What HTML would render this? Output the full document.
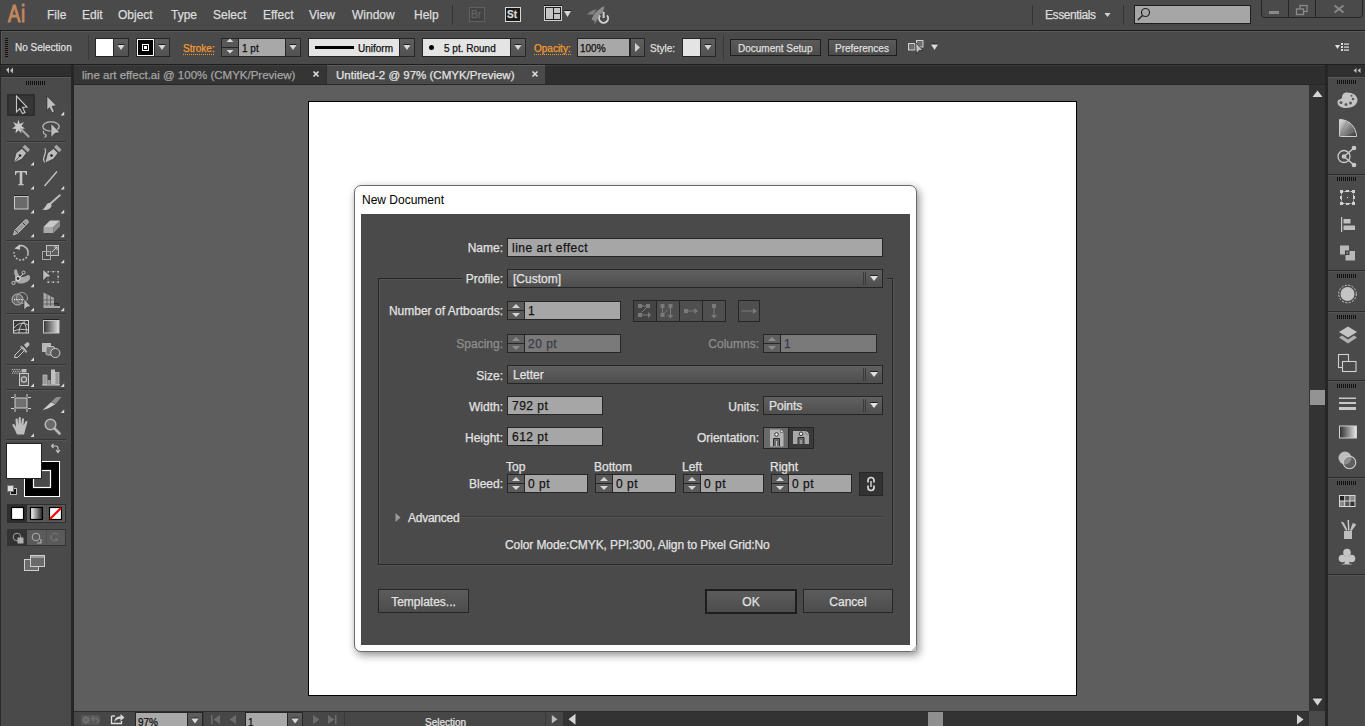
<!DOCTYPE html>
<html><head><meta charset="utf-8">
<style>
*{margin:0;padding:0;box-sizing:border-box}
html,body{width:1365px;height:726px;overflow:hidden;background:#4a4a4a;font-family:"Liberation Sans",sans-serif;font-size:12px;color:#dedede}
.a{position:absolute}
svg{position:absolute;overflow:visible}
.t{position:absolute;white-space:nowrap;line-height:1;-webkit-text-stroke:0.25px currentColor}
</style></head><body>
<!-- MENU BAR -->
<div class="a" style="left:0;top:0;width:1365px;height:30px;background:#4a4a4a"></div>
<div class="a" style="left:0;top:30px;width:1365px;height:1px;background:#1c1c1c"></div>
<!-- CONTROL BAR -->
<div class="a" style="left:0;top:31px;width:1365px;height:1px;background:#5a5a5a"></div>
<div class="a" style="left:0;top:32px;width:1365px;height:32px;background:#4a4a4a"></div>
<div class="a" style="left:0;top:64px;width:1365px;height:1px;background:#1e1e1e"></div>
<div class="a" style="left:0;top:31px;width:1px;height:33px;background:#262626"></div><div class="a" style="left:1px;top:32px;width:1px;height:32px;background:#585858"></div>
<!-- below control bar dark base -->
<div class="a" style="left:0;top:65px;width:1365px;height:661px;background:#262626"></div>
<!-- LEFT PANEL -->
<div class="a" style="left:1px;top:65px;width:70px;height:12px;background:#2f2f2f"></div>
<div class="a" style="left:1px;top:77px;width:70px;height:649px;background:#4a4a4a;border-top:1px solid #5a5a5a"></div>
<!-- TAB BAR -->
<div class="a" style="left:74px;top:65px;width:1251px;height:20px;background:#2e2e2e"></div>
<div class="a" style="left:74px;top:65px;width:1251px;height:1px;background:#3a3a3a"></div>

<div class="a" style="left:74px;top:65px;width:252px;height:19px;background:#353535;border-top:1px solid #404040"></div>
<div class="a" style="left:327px;top:65px;width:218px;height:19px;background:#4a4a4a;border-top:1px solid #5c5c5c"></div>

<div class="a" style="left:74px;top:84px;width:1251px;height:1px;background:#262626"></div>
<div class="a" style="left:1px;top:65px;width:70px;height:1px;background:#3a3a3a"></div>
<div class="a" style="left:1px;top:76px;width:70px;height:1px;background:#222"></div>
<div class="a" style="left:1328px;top:65px;width:37px;height:1px;background:#3a3a3a"></div>
<div class="a" style="left:1328px;top:76px;width:37px;height:1px;background:#222"></div>
<!-- CANVAS -->
<div class="a" style="left:74px;top:85px;width:1235px;height:626px;background:#5e5e5e"></div>
<!-- ARTBOARD -->
<div class="a" style="left:308px;top:101px;width:769px;height:595px;background:#fff;border:1px solid #000"></div>
<!-- V SCROLLBAR -->
<div class="a" style="left:1309px;top:85px;width:16px;height:626px;background:#333"></div>
<div class="a" style="left:1310px;top:390px;width:15px;height:15px;background:#939393"></div>
<!-- STATUS BAR / H SCROLL -->
<div class="a" style="left:74px;top:711px;width:1235px;height:15px;background:#474747;border-top:1px solid #2c2c2c"></div>
<div class="a" style="left:563px;top:711px;width:746px;height:15px;background:#333;border-top:1px solid #2c2c2c"></div>
<div class="a" style="left:928px;top:712px;width:15px;height:14px;background:#8f8f8f"></div>
<div class="a" style="left:1309px;top:711px;width:16px;height:15px;background:#4a4a4a"></div>
<!-- RIGHT PANEL -->
<div class="a" style="left:1328px;top:65px;width:37px;height:12px;background:#2f2f2f"></div>
<div class="a" style="left:1328px;top:77px;width:37px;height:649px;background:#4a4a4a;border-top:1px solid #5a5a5a"></div>


<!-- MENU CONTENT -->
<div class="t" style="left:8px;top:3px;font-size:23px;color:#c4875c;letter-spacing:1px;-webkit-text-stroke:1px #c4875c;transform:scaleX(0.8);transform-origin:0 0">Ai</div>
<div class="t" style="left:47px;top:9px;font-size:12px;color:#dcdcdc">File</div>
<div class="t" style="left:82px;top:9px;font-size:12px;color:#dcdcdc">Edit</div>
<div class="t" style="left:118px;top:9px;font-size:12px;color:#dcdcdc">Object</div>
<div class="t" style="left:171px;top:9px;font-size:12px;color:#dcdcdc">Type</div>
<div class="t" style="left:213px;top:9px;font-size:12px;color:#dcdcdc">Select</div>
<div class="t" style="left:263px;top:9px;font-size:12px;color:#dcdcdc">Effect</div>
<div class="t" style="left:309px;top:9px;font-size:12px;color:#dcdcdc">View</div>
<div class="t" style="left:352px;top:9px;font-size:12px;color:#dcdcdc">Window</div>
<div class="t" style="left:414px;top:9px;font-size:12px;color:#dcdcdc">Help</div>
<div class="a" style="left:452px;top:5px;width:1px;height:20px;background:#333"></div>
<div class="a" style="left:469px;top:7px;width:16px;height:15px;border:1px solid #606060;background:#434343"></div>
<div class="t" style="left:471px;top:10px;font-size:10px;color:#666">Br</div>
<div class="a" style="left:505px;top:7px;width:16px;height:15px;border:1px solid #d8d8d8;background:#1a1a1a"></div>
<div class="t" style="left:507px;top:10px;font-size:10px;font-weight:bold;color:#d8d8d8">St</div>
<svg style="left:0;top:0" width="620" height="30">
 <rect x="544" y="5" width="18" height="1" fill="#1e1e1e"/>
 <rect x="544" y="6" width="18" height="15" fill="#cfcfcf"/>
 <rect x="545" y="7" width="16" height="13" fill="#1e1e1e"/>
 <rect x="546" y="8" width="7" height="11" fill="#c4c4c4"/>
 <rect x="554" y="8" width="6" height="5" fill="#c4c4c4"/>
 <rect x="554" y="14" width="6" height="5" fill="#c4c4c4"/>
 <rect x="564" y="10" width="7" height="1" fill="#1e1e1e"/>
 <path d="M564 11 L571 11 L567.5 17 Z" fill="#d6d6d6"/>
 <path d="M587 14.5 C589.5 11.5 592.5 10 596.5 9.3 L593.5 14.8 Z" fill="#7e7e7e"/>
 <path d="M591.5 19.5 C593.5 14 598 9 604.5 6.3 C603.5 12 600 17 595.5 21.5 Z" fill="#8c8c8c"/>
 <path d="M594 24 L594.8 19.5 L597.2 21 Z" fill="#7e7e7e"/>
 <circle cx="603.6" cy="18.5" r="5.5" fill="#4a4a4a"/>
 <path d="M600.2 15.3 A4.5 4.5 0 1 0 607 15.3" fill="none" stroke="#d0d0d0" stroke-width="1.9"/>
 <rect x="602.6" y="11.8" width="2" height="6.2" fill="#d0d0d0"/>
</svg>
<div class="a" style="left:1032px;top:5px;width:1px;height:20px;background:#333"></div>
<div class="t" style="left:1045px;top:9px;font-size:12px;letter-spacing:-0.4px;color:#dcdcdc">Essentials</div>
<svg style="left:0;top:0" width="1365" height="30">
 <path d="M1104.5 13 L1110.5 13 L1107.5 17 Z" fill="#d6d6d6"/>
 <rect x="1123" y="5" width="1" height="20" fill="#333"/>
</svg>
<div class="a" style="left:1134px;top:5px;width:117px;height:19px;background:#a6a6a6;border:1px solid #1e1e1e"></div>
<svg style="left:0;top:0" width="1365" height="30">
 <circle cx="1145.5" cy="12.5" r="4" fill="none" stroke="#222" stroke-width="1.2"/>
 <path d="M1142.5 15.5 L1137.8 20" stroke="#222" stroke-width="1.4"/>
</svg>
<div class="a" style="left:1261px;top:-3px;width:102px;height:21px;border:1px solid #262626;border-radius:0 0 4px 4px;background:#4a4a4a"></div>
<div class="a" style="left:1288px;top:0;width:1px;height:18px;background:#262626"></div>
<div class="a" style="left:1315px;top:0;width:1px;height:18px;background:#262626"></div>
<svg style="left:0;top:0" width="1365" height="30">
 <rect x="1269" y="11" width="10" height="3" fill="#8a8a8a"/>
 <rect x="1300" y="5.5" width="7" height="6" fill="none" stroke="#8a8a8a" stroke-width="1.3"/>
 <rect x="1296.5" y="9" width="7" height="5.5" fill="#4a4a4a" stroke="#8a8a8a" stroke-width="1.3"/>
 <path d="M1334.5 5.5 L1343.5 12.5 M1343.5 5.5 L1334.5 12.5" stroke="#8a8a8a" stroke-width="1.8"/>
</svg>


<!-- CONTROL BAR CONTENT -->
<svg style="left:0;top:0" width="20" height="64">
 <g fill="#111"><rect x="5" y="38" width="3" height="1"/><rect x="5" y="40" width="3" height="1"/><rect x="5" y="42" width="3" height="1"/><rect x="5" y="44" width="3" height="1"/><rect x="5" y="46" width="3" height="1"/><rect x="5" y="48" width="3" height="1"/><rect x="5" y="50" width="3" height="1"/><rect x="5" y="52" width="3" height="1"/><rect x="5" y="54" width="3" height="1"/><rect x="5" y="56" width="3" height="1"/></g>
</svg>
<div class="t" style="left:15px;top:43px;font-size:10px;color:#dedede">No Selection</div>
<div class="a" style="left:88px;top:35px;width:1px;height:25px;background:#393939"></div>
<div class="a" style="left:95px;top:38px;width:34px;height:19px;background:#262626"></div>
<div class="a" style="left:96px;top:39px;width:17px;height:17px;background:#fff"></div>
<div class="a" style="left:114px;top:39px;width:14px;height:17px;background:linear-gradient(#5e5e5e,#525252)"></div>
<div class="a" style="left:136px;top:38px;width:34px;height:19px;background:#262626"></div>
<div class="a" style="left:137px;top:39px;width:17px;height:17px;background:#000;border:1px solid #fff"></div>
<div class="a" style="left:142px;top:44px;width:7px;height:7px;border:1px solid #fff;background:#000"></div>
<div class="a" style="left:144px;top:46px;width:3px;height:3px;background:#fff"></div>
<div class="a" style="left:155px;top:39px;width:14px;height:17px;background:linear-gradient(#5e5e5e,#525252)"></div>
<div class="t" style="left:183px;top:44px;font-size:10px;color:#f39a2e">Stroke:</div>
<svg style="left:0;top:0" width="1365" height="64"><g fill="#f39a2e"><rect x="183" y="54" width="1" height="1"/><rect x="185" y="54" width="1" height="1"/><rect x="187" y="54" width="1" height="1"/><rect x="189" y="54" width="1" height="1"/><rect x="191" y="54" width="1" height="1"/><rect x="193" y="54" width="1" height="1"/><rect x="195" y="54" width="1" height="1"/><rect x="197" y="54" width="1" height="1"/><rect x="199" y="54" width="1" height="1"/><rect x="201" y="54" width="1" height="1"/><rect x="203" y="54" width="1" height="1"/><rect x="205" y="54" width="1" height="1"/><rect x="207" y="54" width="1" height="1"/><rect x="209" y="54" width="1" height="1"/><rect x="211" y="54" width="1" height="1"/><rect x="213" y="54" width="1" height="1"/></g></svg>
<div class="a" style="left:221px;top:38px;width:80px;height:19px;background:#262626"></div>
<div class="a" style="left:222px;top:39px;width:16px;height:8px;background:#585858"></div>
<div class="a" style="left:222px;top:48px;width:16px;height:8px;background:#585858"></div>
<div class="a" style="left:239px;top:39px;width:46px;height:17px;background:#a8a8a8"></div>
<div class="a" style="left:286px;top:39px;width:14px;height:17px;background:linear-gradient(#5e5e5e,#525252)"></div>
<div class="t" style="left:242px;top:44px;font-size:10px;color:#111">1 pt</div>
<div class="a" style="left:308px;top:38px;width:107px;height:19px;background:#262626"></div>
<div class="a" style="left:309px;top:39px;width:90px;height:17px;background:#e4e4e4"></div>
<div class="a" style="left:315px;top:46px;width:39px;height:3px;background:#000"></div>
<div class="t" style="left:358px;top:44px;font-size:10px;color:#111">Uniform</div>
<div class="a" style="left:400px;top:39px;width:14px;height:17px;background:linear-gradient(#5e5e5e,#525252)"></div>
<div class="a" style="left:422px;top:38px;width:104px;height:19px;background:#262626"></div>
<div class="a" style="left:423px;top:39px;width:87px;height:17px;background:#e4e4e4"></div>
<div class="a" style="left:429px;top:45px;width:5px;height:5px;border-radius:50%;background:#000"></div>
<div class="t" style="left:444px;top:44px;font-size:10px;color:#111">5 pt. Round</div>
<div class="a" style="left:511px;top:39px;width:14px;height:17px;background:linear-gradient(#5e5e5e,#525252)"></div>
<div class="t" style="left:534px;top:44px;font-size:10px;color:#f39a2e">Opacity:</div>
<svg style="left:0;top:0" width="1365" height="64"><g fill="#f39a2e"><rect x="534" y="54" width="1" height="1"/><rect x="536" y="54" width="1" height="1"/><rect x="538" y="54" width="1" height="1"/><rect x="540" y="54" width="1" height="1"/><rect x="542" y="54" width="1" height="1"/><rect x="544" y="54" width="1" height="1"/><rect x="546" y="54" width="1" height="1"/><rect x="548" y="54" width="1" height="1"/><rect x="550" y="54" width="1" height="1"/><rect x="552" y="54" width="1" height="1"/><rect x="554" y="54" width="1" height="1"/><rect x="556" y="54" width="1" height="1"/><rect x="558" y="54" width="1" height="1"/><rect x="560" y="54" width="1" height="1"/><rect x="562" y="54" width="1" height="1"/><rect x="564" y="54" width="1" height="1"/><rect x="566" y="54" width="1" height="1"/><rect x="568" y="54" width="1" height="1"/><rect x="570" y="54" width="1" height="1"/></g></svg>
<div class="a" style="left:577px;top:38px;width:68px;height:19px;background:#262626"></div>
<div class="a" style="left:578px;top:39px;width:51px;height:17px;background:#a8a8a8"></div>
<div class="t" style="left:580px;top:44px;font-size:10px;color:#111">100%</div>
<div class="a" style="left:630px;top:39px;width:14px;height:17px;background:linear-gradient(#5e5e5e,#525252)"></div>
<div class="t" style="left:650px;top:44px;font-size:10px;color:#dedede">Style:</div>
<div class="a" style="left:682px;top:38px;width:34px;height:19px;background:#262626"></div>
<div class="a" style="left:683px;top:39px;width:17px;height:17px;background:#e4e4e4"></div>
<div class="a" style="left:701px;top:39px;width:14px;height:17px;background:linear-gradient(#5e5e5e,#525252)"></div>
<div class="a" style="left:723px;top:35px;width:1px;height:25px;background:#393939"></div>
<div class="a" style="left:730px;top:39px;width:91px;height:17px;background:linear-gradient(#5a5a5a,#4c4c4c);border:1px solid #1e1e1e"></div>
<div class="t" style="left:738px;top:44px;font-size:10px;color:#dedede">Document Setup</div>
<div class="a" style="left:828px;top:39px;width:69px;height:17px;background:linear-gradient(#5a5a5a,#4c4c4c);border:1px solid #1e1e1e"></div>
<div class="t" style="left:835px;top:44px;font-size:10px;color:#dedede">Preferences</div>
<svg style="left:0;top:0" width="1365" height="64">
 <rect x="117.5" y="44" width="7" height="1" fill="#1e1e1e"/><path d="M117.5 45 L124.5 45 L121.0 50 Z" fill="#d8d8d8"/><rect x="158.5" y="44" width="7" height="1" fill="#1e1e1e"/><path d="M158.5 45 L165.5 45 L162.0 50 Z" fill="#d8d8d8"/><rect x="289.5" y="44" width="7" height="1" fill="#1e1e1e"/><path d="M289.5 45 L296.5 45 L293.0 50 Z" fill="#d8d8d8"/><rect x="403.5" y="44" width="7" height="1" fill="#1e1e1e"/><path d="M403.5 45 L410.5 45 L407.0 50 Z" fill="#d8d8d8"/><rect x="514.5" y="44" width="7" height="1" fill="#1e1e1e"/><path d="M514.5 45 L521.5 45 L518.0 50 Z" fill="#d8d8d8"/><rect x="704.5" y="44" width="7" height="1" fill="#1e1e1e"/><path d="M704.5 45 L711.5 45 L708.0 50 Z" fill="#d8d8d8"/><rect x="931" y="43.5" width="7" height="1" fill="#1e1e1e"/><path d="M931 44.5 L938 44.5 L934.5 50.0 Z" fill="#d8d8d8"/>
 <path d="M226.5 42 L233.5 42 L230 38.5 Z" fill="#d8d8d8"/>
 <path d="M226.5 50 L233.5 50 L230 53.5 Z" fill="#d8d8d8"/>
 <rect x="630" y="39" width="1" height="17" fill="#262626"/>
 <path d="M635 43 L640 47.5 L635 52 Z" fill="#d0d0d0"/>
 <rect x="908.5" y="43.5" width="6.5" height="6.5" fill="#6e6e6e" stroke="#d0d0d0" stroke-width="1"/>
 <rect x="916.5" y="40.5" width="6.5" height="6.5" fill="#6e6e6e" stroke="#d0d0d0" stroke-width="1"/>
 <path d="M915.5 42.5 L923 50.5 L919 50.5 L916.5 54 Z" fill="#c4c4c4" stroke="#111" stroke-width="0.6"/>
 <path d="M1335 45 L1340 45 L1337.5 49 Z" fill="#e0e0e0"/>
 <g fill="#e0e0e0"><rect x="1341" y="43" width="2" height="2"/><rect x="1341" y="46" width="2" height="2"/><rect x="1341" y="49" width="2" height="2"/>
 <rect x="1344" y="43.5" width="5" height="1.2"/><rect x="1344" y="46.5" width="5" height="1.2"/><rect x="1344" y="49.5" width="5" height="1.2"/></g>
</svg>


<!-- TAB TEXT -->
<div class="t" style="left:82px;top:70px;font-size:11.5px;color:#a4a4a4">line art effect.ai @ 100% (CMYK/Preview)</div>
<div class="t" style="left:336px;top:70px;font-size:11.5px;color:#e2e2e2">Untitled-2 @ 97% (CMYK/Preview)</div>
<svg style="left:0;top:0" width="1365" height="726">
 <path d="M313.5 71.5 L318.5 76.5 M318.5 71.5 L313.5 76.5" stroke="#dadada" stroke-width="1.7"/>
 <path d="M532.5 71.5 L537.5 76.5 M537.5 71.5 L532.5 76.5" stroke="#dadada" stroke-width="1.7"/>
 <path d="M1312.5 97 L1322.5 97 L1317.5 90.5 Z" fill="#d4d4d4"/>
 <rect x="1312" y="697.5" width="11" height="1" fill="#1e1e1e"/>
 <path d="M1312.5 698.5 L1322.5 698.5 L1317.5 705.5 Z" fill="#d4d4d4"/>
 <path d="M1297 714.5 L1303.5 719.5 L1297 724.5 Z" fill="#d4d4d4"/>
 <path d="M575.5 713.7 L568.5 719.2 L575.5 724.8 Z" fill="#d4d4d4"/>
 <path d="M551.8 715 L557.4 719.2 L551.8 723.4 Z" fill="#bcbcbc"/>
</svg>
<!-- STATUS BAR CONTENT -->
<div class="a" style="left:81px;top:715px;width:19px;height:10px;border-radius:2px;background:#575757"></div>
<svg style="left:0;top:0" width="1365" height="726">
 <g fill="#6e6e6e"><circle cx="86" cy="720" r="3.2"/></g>
 <g stroke="#6e6e6e" stroke-width="1.4"><path d="M82 720 L90 720 M86 716 L86 724 M83.2 717.2 L88.8 722.8 M88.8 717.2 L83.2 722.8"/></g>
 <circle cx="86" cy="720" r="1" fill="#575757"/>
 <path d="M91.5 718.5 L94 716 M91.5 718.5 L94 721 M92 718.5 L97 718.5 L99 720.5 L96.5 723" stroke="#6e6e6e" stroke-width="1.3" fill="none"/>
 <path d="M111.5 716 L111.5 723.5 L121.5 723.5 L121.5 721" stroke="#e0e0e0" stroke-width="1.3" fill="none"/>
 <path d="M111.5 716 L115 716" stroke="#e0e0e0" stroke-width="1.3"/>
 <path d="M114.5 722 C114.5 718 117 716.5 120.5 716.5 L120.5 714 L124.5 717.5 L120.5 721 L120.5 718.8 C118 718.8 116 719.5 114.5 722 Z" fill="#d8d8d8"/>
 <rect x="203" y="712" width="1" height="14" fill="#3a3a3a"/>
 <g fill="#6c6c6c">
 <rect x="211" y="715" width="1.5" height="9"/><path d="M220 715 L213.5 719.5 L220 724 Z"/>
 <path d="M236 715 L229.5 719.5 L236 724 Z"/>
 <path d="M313 715 L319.5 719.5 L313 724 Z"/>
 <path d="M328 715 L334.5 719.5 L328 724 Z"/><rect x="335" y="715" width="1.5" height="9"/>
 </g>
 <rect x="344" y="712" width="1" height="14" fill="#3a3a3a"/>
 <rect x="545" y="712" width="1" height="14" fill="#3a3a3a"/>
</svg>
<div class="a" style="left:135px;top:712px;width:68px;height:14px;background:#262626"></div>
<div class="a" style="left:136px;top:713px;width:51px;height:13px;background:#a8a8a8"></div>
<div class="a" style="left:188px;top:713px;width:14px;height:13px;background:linear-gradient(#5e5e5e,#525252)"></div>
<div class="t" style="left:138px;top:718px;font-size:10px;color:#111">97%</div>
<div class="a" style="left:245px;top:712px;width:58px;height:14px;background:#262626"></div>
<div class="a" style="left:246px;top:713px;width:41px;height:13px;background:#a8a8a8"></div>
<div class="a" style="left:288px;top:713px;width:14px;height:13px;background:linear-gradient(#5e5e5e,#525252)"></div>
<div class="t" style="left:248px;top:718px;font-size:10px;color:#111">1</div>
<div class="t" style="left:425px;top:718px;font-size:10px;color:#e0e0e0">Selection</div>
<svg style="left:0;top:0" width="1365" height="726"><rect x="191.3" y="717.6" width="7.3" height="1" fill="#1e1e1e"/><path d="M191.3 718.6 L198.60000000000002 718.6 L194.95000000000002 723.6 Z" fill="#d8d8d8"/><rect x="291.5" y="717.6" width="7.3" height="1" fill="#1e1e1e"/><path d="M291.5 718.6 L298.8 718.6 L295.15 723.6 Z" fill="#d8d8d8"/></svg>


<!-- LEFT TOOLBAR CONTENT -->
<div class="a" style="left:0;top:65px;width:1px;height:661px;background:#2a2a2a"></div>
<svg style="left:0;top:0" width="72" height="726">
 <path d="M6 69.5 L9 67.5 L9 73.5 Z M10 70.5 L13 67.5 L13 73.5 Z" fill="#bbb"/>
 <g fill="#111"><rect x="26" y="81" width="1" height="4"/><rect x="28" y="81" width="1" height="4"/><rect x="30" y="81" width="1" height="4"/><rect x="32" y="81" width="1" height="4"/><rect x="34" y="81" width="1" height="4"/><rect x="36" y="81" width="1" height="4"/><rect x="38" y="81" width="1" height="4"/><rect x="40" y="81" width="1" height="4"/><rect x="42" y="81" width="1" height="4"/><rect x="44" y="81" width="1" height="4"/></g>
 <rect x="7" y="94" width="28" height="22" fill="#2e2e2e"/>
 <rect x="9" y="96" width="24" height="18" fill="#363636"/>
 <path d="M16.5 96 L16.5 112 L19.8 108.7 L22.5 113.5 L25 112.5 L22.5 107.2 L27 107 Z" fill="#2a2a2a" stroke="#c8c8c8" stroke-width="1.1" stroke-linejoin="miter"/>
 <path d="M47 96.2 L47 110.3 L49.5 107.6 L52 112.6 L54.3 111.8 L52.1 106.3 L56.3 105.6 Z" fill="#bdbdbd" stroke="#1e1e1e" stroke-width="0.5"/>
 <path d="M64.2 111.60000000000001 L64.2 115.4 L60.7 115.4 Z" fill="#d8d8d8"/>
 <g fill="#c8c8c8">
  <path d="M18.5 119.5 L19.8 124 L24 122 L21.5 126 L25 128.5 L21 129 L21.5 133.5 L18.5 130.2 L15.5 133.5 L16 129 L12 128.5 L15.5 126 L13 122 L17.2 124 Z"/>
 </g>
 <path d="M21 129 L28.5 136.5" stroke="#a8a8a8" stroke-width="2" stroke-linecap="round"/>
 <ellipse cx="51" cy="126.5" rx="8.2" ry="4.6" fill="none" stroke="#bcbcbc" stroke-width="1.3"/>
 <path d="M44 131 C42 133 45 134 46 135 C47 136 45 137.5 44.5 137" stroke="#bcbcbc" stroke-width="1.1" fill="none"/>
 <path d="M51 123.5 L51 137.5 L55 133.3 L60 132.5 Z" fill="#bdbdbd" stroke="#1e1e1e" stroke-width="0.5"/>
 <rect x="6" y="141" width="60" height="1" fill="#353535"/><rect x="6" y="142" width="60" height="1" fill="#555"/>
 <!-- pen -->
 <path d="M13.5 163 L16 153 L22 148.5 L26.5 153 L22 159 Z" fill="#bdbdbd" stroke="#2a2a2a" stroke-width="0.6"/>
 <path d="M22.5 147 L25 144.8 L30 149.8 L27.8 152.2 Z" fill="#a8a8a8"/>
 <circle cx="20" cy="155.5" r="1.3" fill="#222"/>
 <path d="M13.5 163 L19.5 156.5" stroke="#333" stroke-width="0.8"/>
 <path d="M34 161.7 L34 165.5 L30.5 165.5 Z" fill="#d8d8d8"/>
 <path d="M44.5 148.5 C47 149.5 45 154 44 157 C43 160 44 162.5 46 162.5" stroke="#bcbcbc" stroke-width="1.3" fill="none"/>
 <path d="M45 163 L47.5 153 L53.5 148.5 L58 153 L53.5 159 Z" fill="#bdbdbd" stroke="#2a2a2a" stroke-width="0.6"/>
 <path d="M54 147 L56.5 144.8 L61.5 149.8 L59.3 152.2 Z" fill="#a8a8a8"/>
 <circle cx="51.5" cy="155.5" r="1.3" fill="#222"/>
 <!-- type -->
 <path d="M15 171 L27 171 L27 175 L26 175 C26 173 25 172.3 23 172.3 L22.3 172.3 L22.3 184 L24 184.5 L24 185.2 L18 185.2 L18 184.5 L19.7 184 L19.7 172.3 L19 172.3 C17 172.3 16 173 16 175 L15 175 Z" fill="#c4c4c4"/>
 <path d="M34 185.7 L34 189.5 L30.5 189.5 Z" fill="#d8d8d8"/>
 <path d="M44.5 186 L57 171.5" stroke="#c4c4c4" stroke-width="1.3"/>
 <path d="M64.2 185.7 L64.2 189.5 L60.7 189.5 Z" fill="#d8d8d8"/>
 <!-- rect -->
 <rect x="14.5" y="196.5" width="13.5" height="12.5" fill="#6a6a6a" stroke="#c8c8c8" stroke-width="1"/>
 <rect x="14" y="195" width="14" height="1" fill="#222"/>
 <path d="M34 209.6 L34 213.4 L30.5 213.4 Z" fill="#d8d8d8"/>
 <path d="M50 204 L59.8 195.3" stroke="#bdbdbd" stroke-width="1.9" stroke-linecap="round"/><path d="M42 209.5 C44.5 209 45.5 206 47 204 C48 202.8 50 202.8 51 204 C52 205.3 51.5 207 50 208.2 C48 209.8 45 210.5 42 209.5 Z" fill="#c4c4c4"/>
 <path d="M64.2 209.6 L64.2 213.4 L60.7 213.4 Z" fill="#d8d8d8"/>
 <!-- pencil -->
 <path d="M13.5 235 L15 230 L24.5 220.5 C25.5 219.5 27 219.5 27.8 220.5 C28.5 221.3 28.5 222.6 27.5 223.5 L18 233 Z" fill="#9a9a9a" stroke="#cfcfcf" stroke-width="0.8"/>
 <path d="M15 230 L18 233" stroke="#222" stroke-width="0.7"/>
 <path d="M22.5 222.5 L25.5 225.5" stroke="#222" stroke-width="0.7"/>
 <path d="M34 233.5 L34 237.3 L30.5 237.3 Z" fill="#d8d8d8"/>
 <path d="M43.5 227 L50 220.5 L60 220.5 L53.5 227 Z" fill="#c8c8c8"/>
 <path d="M43.5 227 L53.5 227 L53.5 233 L43.5 233 Z" fill="#a8a8a8"/>
 <path d="M53.5 227 L60 220.5 L60 226.5 L53.5 233 Z" fill="#8a8a8a"/>
 <path d="M64.2 233.5 L64.2 237.3 L60.7 237.3 Z" fill="#d8d8d8"/><rect x="6" y="240" width="60" height="1" fill="#353535"/><rect x="6" y="241" width="60" height="1" fill="#555"/>
 <!-- rotate -->
 <path d="M18.7 246.1 A7 7 0 0 1 28 253.9" fill="none" stroke="#c0c0c0" stroke-width="1.5"/><path d="M28 253.9 A7 7 0 0 1 14.1 252.1" fill="none" stroke="#c0c0c0" stroke-width="1.6" stroke-dasharray="1.8 1.6"/><path d="M14.3 248.6 L20.2 244.3 L20 249.8 Z" fill="#c8c8c8"/>
 <path d="M34 259.5 L34 263.3 L30.5 263.3 Z" fill="#d8d8d8"/>
 <rect x="46.5" y="245.5" width="12" height="10" fill="#5e5e5e" stroke="#c0c0c0" stroke-width="1"/>
 <rect x="42.5" y="251.5" width="8" height="8" fill="none" stroke="#a8a8a8" stroke-width="1"/>
 <path d="M52 252 L57 247 M54 247 L57 247 L57 250" stroke="#d0d0d0" stroke-width="1" fill="none"/>
 <path d="M64.2 259.5 L64.2 263.3 L60.7 263.3 Z" fill="#d8d8d8"/>
 <!-- warp / puppet -->
 <path d="M14 272 C14 269 16.5 268.5 17.2 270.5 C17.8 273 18.2 275 20.2 276.3 C23 277.8 26 276.3 27.5 275 C29.5 274.3 30.8 276.8 29.8 279 C28.3 282 23.5 284 19.5 283.5 C16.5 283 14.8 281 15.2 278.3 C15.6 276 14 274 14 272 Z" fill="#a8a8a8"/>
 <path d="M13.5 283 L23.5 273.5" stroke="#e0e0e0" stroke-width="0.8"/>
 <circle cx="13.5" cy="283" r="1.6" fill="#444" stroke="#e0e0e0" stroke-width="0.8"/>
 <circle cx="18" cy="278.5" r="2" fill="#333" stroke="#e8e8e8" stroke-width="1"/>
 <circle cx="23.5" cy="272.5" r="1.5" fill="#444" stroke="#e0e0e0" stroke-width="0.8"/>
 <path d="M34 283.5 L34 287.3 L30.5 287.3 Z" fill="#d8d8d8"/>
 <path d="M43 269.5 L43 281 L46.5 277 L51 276.5 Z" fill="#bdbdbd" stroke="#1e1e1e" stroke-width="0.4"/>
 <g fill="#c8c8c8"><rect x="47.5" y="271" width="1.5" height="1.5"/><rect x="52.5" y="271" width="1.5" height="1.5"/><rect x="57.5" y="271" width="1.5" height="1.5"/><rect x="57.5" y="276" width="1.5" height="1.5"/><rect x="57.5" y="281.5" width="1.5" height="1.5"/><rect x="52.5" y="281.5" width="1.5" height="1.5"/><rect x="47.5" y="281.5" width="1.5" height="1.5"/></g>
 <rect x="48" y="271.5" width="10" height="10.5" fill="none" stroke="#c8c8c8" stroke-width="0.6" stroke-dasharray="1 1.2"/>
 <!-- shape builder -->
 <circle cx="17.5" cy="299.5" r="5.5" fill="#6a6a6a" stroke="#bcbcbc" stroke-width="1"/>
 <circle cx="22" cy="298" r="5.5" fill="none" stroke="#a0a0a0" stroke-width="1"/>
 <g fill="#e8e8e8"><rect x="14.0" y="299" width="1.2" height="1.2"/><rect x="16.3" y="299" width="1.2" height="1.2"/><rect x="18.6" y="299" width="1.2" height="1.2"/><rect x="20.9" y="299" width="1.2" height="1.2"/><rect x="23.2" y="299" width="1.2" height="1.2"/></g>
 <path d="M24 299 L24 310 L27 307 L31 306.5 Z" fill="#bdbdbd" stroke="#1e1e1e" stroke-width="0.5"/>
 <path d="M34 307.4 L34 311.2 L30.5 311.2 Z" fill="#d8d8d8"/>
 <path d="M43.5 292.5 L43.5 308 L60 308 L60 306 L54 306 L54 298 L43.5 292.5 Z" fill="#a8a8a8"/>
 <path d="M47 294.5 L47 306 M50.5 296.3 L50.5 306 M43.5 300 L54 300 M43.5 304 L54 304" stroke="#555" stroke-width="0.8"/>
 <path d="M54 303.5 L58 303.5 L58 306" stroke="#222" stroke-width="0.8" fill="none"/>
 <path d="M64.2 307.4 L64.2 311.2 L60.7 311.2 Z" fill="#d8d8d8"/><rect x="6" y="313" width="60" height="1" fill="#353535"/><rect x="6" y="314" width="60" height="1" fill="#555"/>
 <!-- mesh -->
 <rect x="13.5" y="320.5" width="15" height="12.5" fill="#3a3a3a" stroke="#cfcfcf" stroke-width="1"/>
 <path d="M14 328 C18 323 22 322 28 325 M19 333 C19 328 21 324 25 320.5 M14 331 C18 329 23 329 28 330 M24 322 C26 326 27 329 26 333" stroke="#d0d0d0" stroke-width="0.9" fill="none"/>
 <defs><linearGradient id="gr1" x1="0" x2="1"><stop offset="0" stop-color="#333"/><stop offset="1" stop-color="#e0e0e0"/></linearGradient></defs>
 <rect x="43.5" y="320.5" width="15.5" height="12.5" fill="url(#gr1)" stroke="#c8c8c8" stroke-width="1"/>
 <rect x="43" y="319" width="16" height="1" fill="#222"/>
 <!-- eyedropper -->
 <path d="M14.5 357.5 L15 355 L23 347 L25.5 349.5 L17.5 357.5 Z" fill="#4a4a4a" stroke="#d8d8d8" stroke-width="0.9"/>
 <path d="M21.5 345.5 L27.5 351.5 L26 353 L20 347 Z" fill="#a8a8a8"/>
 <path d="M24 345 L26 343 C27 342 28.5 342 29 343 C29.8 344 29.5 345 28.8 345.8 L26.5 348 Z" fill="#bdbdbd"/>
 <path d="M34 357.2 L34 361 L30.5 361 Z" fill="#d8d8d8"/>
 <rect x="42" y="343" width="9" height="9" fill="#b8b8b8"/>
 <rect x="46" y="346.5" width="8.5" height="8.5" rx="1.5" fill="#777" stroke="#cfcfcf" stroke-width="0.8"/>
 <circle cx="55.3" cy="353" r="4.6" fill="#555" stroke="#cfcfcf" stroke-width="1"/>
 <rect x="6" y="364" width="60" height="1" fill="#353535"/><rect x="6" y="365" width="60" height="1" fill="#555"/>
 <!-- symbol sprayer -->
 <g fill="#c8c8c8"><rect x="12.0" y="369.0" width="1.1" height="1.1"/><rect x="13.0" y="370.8" width="1.1" height="1.1"/><rect x="12.0" y="372.6" width="1.1" height="1.1"/><rect x="14.2" y="369.0" width="1.1" height="1.1"/><rect x="15.2" y="370.8" width="1.1" height="1.1"/><rect x="14.2" y="372.6" width="1.1" height="1.1"/><rect x="16.4" y="369.0" width="1.1" height="1.1"/><rect x="17.4" y="370.8" width="1.1" height="1.1"/><rect x="16.4" y="372.6" width="1.1" height="1.1"/><rect x="18.6" y="369.0" width="1.1" height="1.1"/><rect x="19.6" y="370.8" width="1.1" height="1.1"/><rect x="18.6" y="372.6" width="1.1" height="1.1"/></g>
 <rect x="19.5" y="373.5" width="9" height="12" fill="#5a5a5a" stroke="#c8c8c8" stroke-width="1"/>
 <rect x="21.5" y="369" width="5" height="3.5" fill="#b8b8b8"/>
 <circle cx="24" cy="379.5" r="2.6" fill="none" stroke="#c8c8c8" stroke-width="1.2"/>
 <path d="M34 383.2 L34 387 L30.5 387 Z" fill="#d8d8d8"/>
 <rect x="43" y="375" width="4" height="9.5" fill="#999" stroke="#d0d0d0" stroke-width="0.6"/>
 <rect x="47.5" y="380" width="3" height="4.5" fill="#999"/>
 <rect x="51" y="369.5" width="4" height="15" fill="#c0c0c0"/>
 <rect x="55.5" y="372.5" width="3.5" height="12" fill="#999" stroke="#d0d0d0" stroke-width="0.6"/>
 <rect x="42" y="384.5" width="18" height="1" fill="#d0d0d0"/>
 <path d="M64.2 383.2 L64.2 387 L60.7 387 Z" fill="#d8d8d8"/><rect x="6" y="389" width="60" height="1" fill="#353535"/><rect x="6" y="390" width="60" height="1" fill="#555"/>
 <!-- artboard -->
 <rect x="15" y="398" width="12" height="10" fill="#707070" stroke="#d0d0d0" stroke-width="1"/>
 <path d="M11 397.5 L14 397.5 M28 397.5 L31 397.5 M11 408.5 L14 408.5 M28 408.5 L31 408.5 M15 394 L15 397 M27 394 L27 397 M15 409 L15 412 M27 409 L27 412" stroke="#d0d0d0" stroke-width="1"/>
 <path d="M42.5 410.3 L51 402.2 L55.3 404.3 L48.5 408.3 Z" fill="#cfcfcf"/>
 <path d="M51.3 401.8 L56.3 397 L61.5 397 L55.6 404 Z" fill="#8e8e8e"/>
 <path d="M64.2 409.2 L64.2 413 L60.7 413 Z" fill="#d8d8d8"/>
 <!-- hand -->
 <path d="M17 434.5 L15 430 L12.5 425.5 C12 424 13.5 423.3 14.5 424.5 L16 427 L15.5 419.5 C15.5 418 17.5 418 17.7 419.5 L18.3 425 L18.7 418 C18.8 416.8 20.8 416.8 20.8 418 L21 425 L22 419 C22.2 417.8 24 418 24 419.2 L23.5 425.5 L25.5 421.5 C26 420.5 27.8 421 27.4 422.3 L25.5 429 L24 434.5 Z" fill="#bdbdbd"/>
 <path d="M34 433.2 L34 437 L30.5 437 Z" fill="#d8d8d8"/>
 <circle cx="50.5" cy="424.5" r="5.3" fill="#6a6a6a" stroke="#b8b8b8" stroke-width="1.5"/>
 <path d="M54.5 428.5 L59.5 433.5" stroke="#b8b8b8" stroke-width="2.6" stroke-linecap="round"/>
 <rect x="6" y="439" width="60" height="1" fill="#353535"/><rect x="6" y="440" width="60" height="1" fill="#555"/>
 <!-- fill stroke -->
 <rect x="24.5" y="461.5" width="35" height="35" fill="#000" stroke="#ffffff" stroke-width="1"/>
 <rect x="33.5" y="470.5" width="17" height="17" fill="#4a4a4a" stroke="#ffffff" stroke-width="1.2"/>
 <rect x="6.5" y="443.5" width="35" height="35" fill="#fff" stroke="#222" stroke-width="1"/>
 <path d="M51.5 446 L53.5 444 M51.5 446 L53.5 448 M51.5 446 L56 446 C57.5 446 58 447 58 448.5 L58 452 M56 450 L58 452.5 L60 450" stroke="#c8c8c8" stroke-width="1.1" fill="none"/>
 <rect x="10.5" y="488.5" width="6" height="6" fill="#111" stroke="#c0c0c0" stroke-width="1"/>
 <rect x="7.5" y="485.5" width="6" height="6" fill="#ddd" stroke="#777" stroke-width="1"/>
 <!-- color mode buttons -->
 <rect x="7" y="504" width="59" height="19" fill="#2e2e2e"/>
 <rect x="27" y="505" width="38" height="17" fill="#5a5a5a"/>
 <rect x="46" y="505" width="1" height="17" fill="#4e4e4e"/>
 <rect x="11.5" y="507.5" width="12" height="12" fill="#fff" stroke="#000" stroke-width="1.2"/>
 <defs><linearGradient id="gr2" x1="0" x2="1"><stop offset="0" stop-color="#fff"/><stop offset="1" stop-color="#222"/></linearGradient></defs>
 <rect x="30.5" y="507.5" width="12" height="12" fill="url(#gr2)" stroke="#000" stroke-width="1.2"/>
 <rect x="49.5" y="507.5" width="12" height="12" fill="#fff" stroke="#000" stroke-width="1.2"/>
 <path d="M50 519 L61 508" stroke="#f00" stroke-width="2.2"/>
 <!-- draw modes -->
 <rect x="7" y="529" width="59" height="17" fill="#333"/>
 <rect x="27" y="530" width="38" height="15" fill="#5a5a5a"/>
 <rect x="46" y="530" width="1" height="15" fill="#4e4e4e"/>
 <circle cx="17" cy="537" r="3.8" fill="none" stroke="#a0a0a0" stroke-width="1"/>
 <rect x="17.5" y="537.5" width="6" height="6" fill="#b0b0b0"/>
 <circle cx="36" cy="537" r="3.8" fill="#5a5a5a" stroke="#b0b0b0" stroke-width="1"/>
 <path d="M41 539 L41 543 L37 543" stroke="#b0b0b0" stroke-width="1.2" fill="none"/>
 <path d="M58 535 A3.8 3.8 0 1 0 58 539 L55 539" stroke="#7a7a7a" stroke-width="1" fill="none"/>
 <!-- screen mode -->
 <rect x="24.5" y="559.5" width="14" height="11" fill="#6a6a6a" stroke="#cfcfcf" stroke-width="1"/>
 <rect x="30.5" y="555.5" width="14" height="11" fill="#6a6a6a" stroke="#cfcfcf" stroke-width="1"/>
 <rect x="31" y="556" width="13" height="2" fill="#9a9a9a"/>
</svg>


<!-- RIGHT PANEL CONTENT -->
<div class="a" style="left:1325px;top:65px;width:3px;height:661px;background:#262626"></div>
<svg style="left:0;top:0" width="1365" height="726">
 <path d="M1353.5 70.5 L1356.5 68 L1356.5 73 Z M1357.5 70.5 L1360.5 68 L1360.5 73 Z" fill="#bbb"/>
 <g fill="#111"><rect x="1337" y="80" width="1" height="4"/><rect x="1339" y="80" width="1" height="4"/><rect x="1341" y="80" width="1" height="4"/><rect x="1343" y="80" width="1" height="4"/><rect x="1345" y="80" width="1" height="4"/><rect x="1347" y="80" width="1" height="4"/><rect x="1349" y="80" width="1" height="4"/><rect x="1351" y="80" width="1" height="4"/><rect x="1353" y="80" width="1" height="4"/><rect x="1355" y="80" width="1" height="4"/></g>
 <!-- palette -->
 <path d="M1347 92.5 C1353 92.5 1357.5 95.5 1357.5 100 C1357.5 105 1352 108 1346 108 C1340.5 108 1337.5 105.5 1337.5 102 C1337.5 99.5 1340.5 99.5 1342 98 C1342 95 1343 92.5 1347 92.5 Z" fill="#c4c4c4"/>
 <g fill="#5a5a5a"><circle cx="1341" cy="102.5" r="1.5"/><circle cx="1346" cy="104.5" r="1.5"/><circle cx="1350.5" cy="103" r="1.5"/><circle cx="1353" cy="99" r="1.3"/><circle cx="1351.5" cy="95.8" r="1"/></g>
 <!-- color guide -->
 <defs><linearGradient id="cg" x1="0" y1="0" x2="1" y2="1"><stop offset="0" stop-color="#e0e0e0"/><stop offset="1" stop-color="#333"/></linearGradient></defs>
 <path d="M1339.5 136.5 L1339.5 119.5 A17 17 0 0 1 1356.5 136.5 Z" fill="url(#cg)" stroke="#d0d0d0" stroke-width="1"/>
 <path d="M1339.5 136.5 L1347 121 M1339.5 136.5 L1352.5 125 M1339.5 136.5 L1355.5 130.5" stroke="#888" stroke-width="0.7"/>
 <!-- kuler/graph -->
 <circle cx="1344" cy="156.5" r="6" fill="none" stroke="#c8c8c8" stroke-width="1.3"/>
 <path d="M1344 156.5 L1354 148 M1344 156.5 L1354 165" stroke="#c8c8c8" stroke-width="1.6"/>
 <circle cx="1344" cy="156.5" r="2.3" fill="#c8c8c8"/>
 <circle cx="1354" cy="148" r="2.3" fill="#c8c8c8"/>
 <circle cx="1354" cy="165" r="2.3" fill="#c8c8c8"/>
 <rect x="1328" y="174" width="37" height="1" fill="#2a2a2a"/><rect x="1328" y="175" width="37" height="1" fill="#555"/><g fill="#111"><rect x="1337" y="177" width="1" height="4"/><rect x="1339" y="177" width="1" height="4"/><rect x="1341" y="177" width="1" height="4"/><rect x="1343" y="177" width="1" height="4"/><rect x="1345" y="177" width="1" height="4"/><rect x="1347" y="177" width="1" height="4"/><rect x="1349" y="177" width="1" height="4"/><rect x="1351" y="177" width="1" height="4"/><rect x="1353" y="177" width="1" height="4"/><rect x="1355" y="177" width="1" height="4"/></g>
 <!-- transform -->
 <rect x="1341.5" y="191.5" width="12" height="12" fill="none" stroke="#c8c8c8" stroke-width="1" stroke-dasharray="2 1"/>
 <g fill="#d0d0d0"><rect x="1340" y="190" width="3" height="3"/><rect x="1352" y="190" width="3" height="3"/><rect x="1340" y="202" width="3" height="3"/><rect x="1352" y="202" width="3" height="3"/><rect x="1346" y="190" width="3" height="2"/><rect x="1346" y="203" width="3" height="2"/><rect x="1340" y="196" width="2" height="3"/><rect x="1353" y="196" width="2" height="3"/></g>
 <rect x="1347" y="197" width="1" height="1" fill="#ddd"/>
 <!-- align -->
 <rect x="1341" y="217" width="1.2" height="15" fill="#c8c8c8"/>
 <rect x="1343.5" y="219" width="7" height="4.5" fill="#c0c0c0"/>
 <rect x="1343.5" y="225.5" width="11.5" height="4.5" fill="#c0c0c0"/>
 <!-- pathfinder -->
 <rect x="1340" y="245.5" width="9" height="9" fill="#b8b8b8"/>
 <rect x="1345.5" y="251" width="9.5" height="9.5" fill="#b8b8b8"/>
 <rect x="1345.5" y="251" width="3.5" height="3.5" fill="#777" stroke="#222" stroke-width="0.8"/>
 <rect x="1328" y="270" width="37" height="1" fill="#2a2a2a"/><rect x="1328" y="271" width="37" height="1" fill="#555"/><g fill="#111"><rect x="1337" y="274" width="1" height="4"/><rect x="1339" y="274" width="1" height="4"/><rect x="1341" y="274" width="1" height="4"/><rect x="1343" y="274" width="1" height="4"/><rect x="1345" y="274" width="1" height="4"/><rect x="1347" y="274" width="1" height="4"/><rect x="1349" y="274" width="1" height="4"/><rect x="1351" y="274" width="1" height="4"/><rect x="1353" y="274" width="1" height="4"/><rect x="1355" y="274" width="1" height="4"/></g>
 <!-- stroke circle -->
 <circle cx="1347.5" cy="294" r="7" fill="#c4c4c4"/>
 <circle cx="1347.5" cy="294" r="8.8" fill="none" stroke="#d0d0d0" stroke-width="1" stroke-dasharray="2 1.5"/>
 <rect x="1328" y="311" width="37" height="1" fill="#2a2a2a"/><rect x="1328" y="312" width="37" height="1" fill="#555"/><g fill="#111"><rect x="1337" y="315" width="1" height="4"/><rect x="1339" y="315" width="1" height="4"/><rect x="1341" y="315" width="1" height="4"/><rect x="1343" y="315" width="1" height="4"/><rect x="1345" y="315" width="1" height="4"/><rect x="1347" y="315" width="1" height="4"/><rect x="1349" y="315" width="1" height="4"/><rect x="1351" y="315" width="1" height="4"/><rect x="1353" y="315" width="1" height="4"/><rect x="1355" y="315" width="1" height="4"/></g>
 <!-- layers -->
 <path d="M1339 332 L1348 326.5 L1357 332 L1348 337.5 Z" fill="#c4c4c4"/>
 <path d="M1339 337.5 L1342 335.5 L1348 339.5 L1354 335.5 L1357 337.5 L1348 343.5 Z" fill="#b0b0b0"/>
 <!-- artboards -->
 <rect x="1338.5" y="354.5" width="10" height="13" fill="none" stroke="#d0d0d0" stroke-width="1.1"/>
 <rect x="1342.5" y="361.5" width="13.5" height="10" fill="#4a4a4a" stroke="#d0d0d0" stroke-width="1.1"/>
 <rect x="1328" y="380" width="37" height="1" fill="#2a2a2a"/><rect x="1328" y="381" width="37" height="1" fill="#555"/><g fill="#111"><rect x="1337" y="384" width="1" height="4"/><rect x="1339" y="384" width="1" height="4"/><rect x="1341" y="384" width="1" height="4"/><rect x="1343" y="384" width="1" height="4"/><rect x="1345" y="384" width="1" height="4"/><rect x="1347" y="384" width="1" height="4"/><rect x="1349" y="384" width="1" height="4"/><rect x="1351" y="384" width="1" height="4"/><rect x="1353" y="384" width="1" height="4"/><rect x="1355" y="384" width="1" height="4"/></g>
 <!-- stroke lines -->
 <rect x="1339" y="397.5" width="17" height="1.5" fill="#c8c8c8"/>
 <rect x="1339" y="402" width="17" height="2" fill="#c8c8c8"/>
 <rect x="1339" y="407" width="17" height="3" fill="#c8c8c8"/>
 <!-- gradient -->
 <defs><linearGradient id="gg" x1="0" x2="1"><stop offset="0" stop-color="#2a2a2a"/><stop offset="1" stop-color="#e8e8e8"/></linearGradient></defs>
 <rect x="1339.5" y="426" width="17" height="12" fill="url(#gg)" stroke="#d0d0d0" stroke-width="1"/>
 <!-- transparency -->
 <circle cx="1345" cy="458" r="6.5" fill="#bdbdbd"/>
 <circle cx="1349.5" cy="462.5" r="6.3" fill="#6e6e6e" fill-opacity="0.6" stroke="#d0d0d0" stroke-width="1.1"/>
 <rect x="1328" y="477" width="37" height="1" fill="#2a2a2a"/><rect x="1328" y="478" width="37" height="1" fill="#555"/><g fill="#111"><rect x="1337" y="481" width="1" height="4"/><rect x="1339" y="481" width="1" height="4"/><rect x="1341" y="481" width="1" height="4"/><rect x="1343" y="481" width="1" height="4"/><rect x="1345" y="481" width="1" height="4"/><rect x="1347" y="481" width="1" height="4"/><rect x="1349" y="481" width="1" height="4"/><rect x="1351" y="481" width="1" height="4"/><rect x="1353" y="481" width="1" height="4"/><rect x="1355" y="481" width="1" height="4"/></g>
 <!-- swatches -->
 <rect x="1339" y="495" width="16.5" height="12" fill="#d8d8d8"/>
 <g fill="#222"><rect x="1340" y="496" width="4.2" height="4.5"/></g>
 <g fill="#555"><rect x="1345.2" y="496" width="4.2" height="4.5"/><rect x="1345.2" y="501.5" width="4.2" height="4.5"/></g>
 <g fill="#888"><rect x="1350.3" y="496" width="4.2" height="4.5"/><rect x="1340" y="501.5" width="4.2" height="4.5"/></g>
 <rect x="1350.3" y="501.5" width="4.2" height="4.5" fill="#333"/>
 <!-- brushes -->
 <rect x="1344" y="531" width="8" height="8" fill="#bdbdbd"/>
 <path d="M1346 531 L1341 522 C1342 521.5 1343 522 1344 523 L1347.5 530 Z" fill="#c0c0c0"/>
 <path d="M1348 530.5 L1347.5 520 L1349 520 L1349.5 530.5 Z" fill="#c8c8c8"/>
 <path d="M1350 530.5 L1352.5 523.5 C1354 523 1356 524 1356 525 L1351.5 531 Z" fill="#c0c0c0"/>
 <!-- symbols club -->
 <circle cx="1347" cy="552.5" r="3.8" fill="#c4c4c4"/>
 <circle cx="1342.5" cy="558.5" r="3.8" fill="#c4c4c4"/>
 <circle cx="1351.5" cy="558.5" r="3.8" fill="#c4c4c4"/>
 <path d="M1346 556 L1348 556 L1349.5 563.5 L1353 564.5 L1341 564.5 L1344.5 563.5 Z" fill="#c4c4c4"/>
 <rect x="1328" y="574" width="37" height="1" fill="#2a2a2a"/><rect x="1328" y="575" width="37" height="1" fill="#555"/>
</svg>

<!-- DIALOG -->
<div class="a" style="left:354px;top:185px;width:563px;height:467px;background:#fff;border:1px solid #6a6a6a;border-radius:7px 7px 2px 7px;box-shadow:2px 3px 8px rgba(0,0,0,0.45)"></div>
<div class="a" style="left:361px;top:214px;width:549px;height:431px;background:#4a4a4a"></div>


<!-- DIALOG CONTENT -->
<div class="t" style="left:362px;top:194px;font-size:12px;color:#000;-webkit-text-stroke:0">New Document</div>
<div class="t" style="left:203px;top:242px;width:300px;text-align:right;font-size:12px;color:#e2e2e2">Name:</div>
<div class="a" style="left:507px;top:238px;width:376px;height:19px;background:#a6a6a6;border:1px solid #262626"></div>
<div class="t" style="left:512px;top:242px;font-size:12px;color:#141414;letter-spacing:0.5px;">line art effect</div>
<div class="a" style="left:378px;top:278px;width:515px;height:287px;border:1px solid #262626;box-shadow:inset 1px 1px 0 #555, 1px 1px 0 #555"></div>
<div class="a" style="left:462px;top:274px;width:425px;height:8px;background:#4a4a4a"></div>
<div class="t" style="left:203px;top:273px;width:300px;text-align:right;font-size:12px;color:#e2e2e2">Profile:</div>
<div class="a" style="left:507px;top:269px;width:376px;height:19px;background:linear-gradient(#606060,#4e4e4e);border:1px solid #262626"></div>
<div class="t" style="left:513px;top:273px;font-size:12px;color:#e2e2e2;">[Custom]</div>
<div class="t" style="left:203px;top:305px;width:300px;text-align:right;font-size:12px;color:#e2e2e2">Number of Artboards:</div>
<div class="a" style="left:507px;top:301px;width:114px;height:19px;background:#262626"></div>
<div class="a" style="left:508px;top:302px;width:16px;height:8px;background:#5a5a5a"></div>
<div class="a" style="left:508px;top:311px;width:16px;height:8px;background:#5a5a5a"></div>
<div class="a" style="left:525px;top:302px;width:95px;height:17px;background:#a6a6a6"></div>
<div class="t" style="left:528px;top:305px;font-size:12px;color:#141414;letter-spacing:0.5px;">1</div>
<div class="a" style="left:633px;top:300px;width:93px;height:22px;background:#262626"></div>
<div class="a" style="left:634px;top:301px;width:22px;height:20px;background:#444"></div>
<div class="a" style="left:657px;top:301px;width:22px;height:20px;background:#4f4f4f"></div>
<div class="a" style="left:680px;top:301px;width:22px;height:20px;background:#4f4f4f"></div>
<div class="a" style="left:703px;top:301px;width:22px;height:20px;background:#4f4f4f"></div>
<div class="a" style="left:738px;top:300px;width:22px;height:22px;background:#262626"></div>
<div class="a" style="left:739px;top:301px;width:20px;height:20px;background:#4f4f4f"></div>
<div class="t" style="left:203px;top:338px;width:300px;text-align:right;font-size:12px;color:#8e8e8e">Spacing:</div>
<div class="a" style="left:507px;top:334px;width:114px;height:19px;background:#262626"></div>
<div class="a" style="left:508px;top:335px;width:16px;height:8px;background:#5f5f5f"></div>
<div class="a" style="left:508px;top:344px;width:16px;height:8px;background:#5f5f5f"></div>
<div class="a" style="left:525px;top:335px;width:95px;height:17px;background:#7a7a7a"></div>
<div class="t" style="left:528px;top:338px;font-size:12px;color:#3a3a48;letter-spacing:0.5px;">20 pt</div>
<div class="t" style="left:459px;top:338px;width:300px;text-align:right;font-size:12px;color:#8e8e8e">Columns:</div>
<div class="a" style="left:763px;top:334px;width:114px;height:19px;background:#262626"></div>
<div class="a" style="left:764px;top:335px;width:16px;height:8px;background:#5f5f5f"></div>
<div class="a" style="left:764px;top:344px;width:16px;height:8px;background:#5f5f5f"></div>
<div class="a" style="left:781px;top:335px;width:95px;height:17px;background:#7a7a7a"></div>
<div class="t" style="left:784px;top:338px;font-size:12px;color:#3a3a48;letter-spacing:0.5px;">1</div>
<div class="t" style="left:203px;top:370px;width:300px;text-align:right;font-size:12px;color:#e2e2e2">Size:</div>
<div class="a" style="left:507px;top:365px;width:376px;height:19px;background:linear-gradient(#606060,#4e4e4e);border:1px solid #262626"></div>
<div class="t" style="left:513px;top:369px;font-size:12px;color:#e2e2e2;">Letter</div>
<div class="t" style="left:203px;top:401px;width:300px;text-align:right;font-size:12px;color:#e2e2e2">Width:</div>
<div class="a" style="left:507px;top:396px;width:96px;height:19px;background:#a6a6a6;border:1px solid #262626"></div>
<div class="t" style="left:512px;top:400px;font-size:12px;color:#141414;letter-spacing:0.5px;">792 pt</div>
<div class="t" style="left:459px;top:401px;width:300px;text-align:right;font-size:12px;color:#e2e2e2">Units:</div>
<div class="a" style="left:763px;top:396px;width:120px;height:19px;background:linear-gradient(#606060,#4e4e4e);border:1px solid #262626"></div>
<div class="t" style="left:769px;top:400px;font-size:12px;color:#e2e2e2;">Points</div>
<div class="t" style="left:203px;top:432px;width:300px;text-align:right;font-size:12px;color:#e2e2e2">Height:</div>
<div class="a" style="left:507px;top:427px;width:96px;height:19px;background:#a6a6a6;border:1px solid #262626"></div>
<div class="t" style="left:512px;top:431px;font-size:12px;color:#141414;letter-spacing:0.5px;">612 pt</div>
<div class="t" style="left:459px;top:432px;width:300px;text-align:right;font-size:12px;color:#e2e2e2">Orientation:</div>
<div class="a" style="left:763px;top:427px;width:51px;height:22px;background:#262626"></div>
<div class="a" style="left:764px;top:428px;width:24px;height:20px;background:#6a6a6a"></div>
<div class="a" style="left:789px;top:428px;width:24px;height:20px;background:#3a3a3a"></div>
<div class="t" style="left:506px;top:461px;font-size:12px;color:#e2e2e2;">Top</div>
<div class="t" style="left:594px;top:461px;font-size:12px;color:#e2e2e2;">Bottom</div>
<div class="t" style="left:682px;top:461px;font-size:12px;color:#e2e2e2;">Left</div>
<div class="t" style="left:770px;top:461px;font-size:12px;color:#e2e2e2;">Right</div>
<div class="t" style="left:203px;top:478px;width:300px;text-align:right;font-size:12px;color:#e2e2e2">Bleed:</div>
<div class="a" style="left:507px;top:474px;width:81px;height:19px;background:#262626"></div>
<div class="a" style="left:508px;top:475px;width:16px;height:8px;background:#5a5a5a"></div>
<div class="a" style="left:508px;top:484px;width:16px;height:8px;background:#5a5a5a"></div>
<div class="a" style="left:525px;top:475px;width:62px;height:17px;background:#a6a6a6"></div>
<div class="t" style="left:528px;top:478px;font-size:12px;color:#141414;letter-spacing:0.5px;">0 pt</div>
<div class="a" style="left:595px;top:474px;width:81px;height:19px;background:#262626"></div>
<div class="a" style="left:596px;top:475px;width:16px;height:8px;background:#5a5a5a"></div>
<div class="a" style="left:596px;top:484px;width:16px;height:8px;background:#5a5a5a"></div>
<div class="a" style="left:613px;top:475px;width:62px;height:17px;background:#a6a6a6"></div>
<div class="t" style="left:616px;top:478px;font-size:12px;color:#141414;letter-spacing:0.5px;">0 pt</div>
<div class="a" style="left:683px;top:474px;width:81px;height:19px;background:#262626"></div>
<div class="a" style="left:684px;top:475px;width:16px;height:8px;background:#5a5a5a"></div>
<div class="a" style="left:684px;top:484px;width:16px;height:8px;background:#5a5a5a"></div>
<div class="a" style="left:701px;top:475px;width:62px;height:17px;background:#a6a6a6"></div>
<div class="t" style="left:704px;top:478px;font-size:12px;color:#141414;letter-spacing:0.5px;">0 pt</div>
<div class="a" style="left:771px;top:474px;width:81px;height:19px;background:#262626"></div>
<div class="a" style="left:772px;top:475px;width:16px;height:8px;background:#5a5a5a"></div>
<div class="a" style="left:772px;top:484px;width:16px;height:8px;background:#5a5a5a"></div>
<div class="a" style="left:789px;top:475px;width:62px;height:17px;background:#a6a6a6"></div>
<div class="t" style="left:792px;top:478px;font-size:12px;color:#141414;letter-spacing:0.5px;">0 pt</div>
<div class="a" style="left:859px;top:472px;width:24px;height:24px;background:#333;border:1px solid #262626"></div>
<div class="t" style="left:408px;top:512px;font-size:12px;color:#e2e2e2;letter-spacing:-0.25px">Advanced</div>
<div class="a" style="left:460px;top:516px;width:424px;height:1px;background:#3a3a3a"></div>
<div class="a" style="left:460px;top:517px;width:424px;height:1px;background:#545454"></div>
<div class="t" style="left:505px;top:539px;font-size:12px;color:#e2e2e2;letter-spacing:-0.1px">Color Mode:CMYK, PPI:300, Align to Pixel Grid:No</div>
<div class="a" style="left:378px;top:589px;width:91px;height:24px;background:linear-gradient(#5c5c5c,#4c4c4c);border:1px solid #262626"></div>
<div class="t" style="left:378px;top:596px;width:91px;text-align:center;font-size:12px;color:#e2e2e2">Templates...</div>
<div class="a" style="left:705px;top:589px;width:92px;height:25px;background:linear-gradient(#5c5c5c,#4c4c4c);border:2px solid #1e1e1e"></div>
<div class="t" style="left:705px;top:596px;width:92px;text-align:center;font-size:12px;color:#e2e2e2">OK</div>
<div class="a" style="left:803px;top:589px;width:90px;height:24px;background:linear-gradient(#5c5c5c,#4c4c4c);border:1px solid #262626"></div>
<div class="t" style="left:803px;top:596px;width:90px;text-align:center;font-size:12px;color:#e2e2e2">Cancel</div>
<svg style="left:0;top:0" width="1365" height="726"><rect x="863" y="272" width="1" height="13" fill="#3a3a3a"/><rect x="865" y="272" width="1" height="13" fill="#3a3a3a"/>
<rect x="870" y="275" width="8" height="1" fill="#222"/><path d="M870 276 L878 276 L874 281 Z" fill="#e0e0e0"/>
<path d="M512 308 L520 308 L516 304 Z" fill="#d4d4d4"/>
<path d="M512 313 L520 313 L516 317 Z" fill="#d4d4d4"/>
<g fill="#7a7a7a" stroke="#7a7a7a">
<rect x="638" y="304" width="4" height="4" stroke="none"/><rect x="646" y="304" width="4" height="4" stroke="none"/><path d="M642 306 L646 306" stroke-width="1" fill="none"/>
<path d="M646 308 L641.5 312.5" stroke-width="1" fill="none"/><rect x="638" y="313" width="4" height="4" stroke="none"/><path d="M642 315 L648 315" stroke-width="1" fill="none"/><path d="M648 312 L651 315 L648 318 Z" stroke="none"/>
<rect x="660.5" y="304" width="4" height="4" stroke="none"/><rect x="668.5" y="304" width="4" height="4" stroke="none"/><rect x="660.5" y="313" width="4" height="4" stroke="none"/>
<path d="M662.5 308 L662.5 313 M670.5 308 L670.5 315 M668 309.5 L664.5 313" stroke-width="1" fill="none"/><path d="M667.5 315 L673.5 315 L670.5 318.5 Z" stroke="none"/>
<rect x="684" y="309" width="4" height="4" stroke="none"/><path d="M688 311 L695 311" stroke-width="1" fill="none"/><path d="M694.5 308 L698 311 L694.5 314 Z" stroke="none"/>
<rect x="712" y="304" width="4" height="4" stroke="none"/><path d="M714 308 L714 315" stroke-width="1" fill="none"/><path d="M711 315 L717 315 L714 318.5 Z" stroke="none"/>
<path d="M741.5 311 L754 311" stroke-width="1" fill="none"/><path d="M753 308 L757 311 L753 314 Z" stroke="none"/>
</g>
<path d="M512 341 L520 341 L516 337 Z" fill="#8c8c8c"/>
<path d="M512 346 L520 346 L516 350 Z" fill="#8c8c8c"/>
<path d="M768 341 L776 341 L772 337 Z" fill="#8c8c8c"/>
<path d="M768 346 L776 346 L772 350 Z" fill="#8c8c8c"/>
<rect x="863" y="368" width="1" height="13" fill="#3a3a3a"/><rect x="865" y="368" width="1" height="13" fill="#3a3a3a"/>
<rect x="870" y="371" width="8" height="1" fill="#222"/><path d="M870 372 L878 372 L874 377 Z" fill="#e0e0e0"/>
<rect x="863" y="399" width="1" height="13" fill="#3a3a3a"/><rect x="865" y="399" width="1" height="13" fill="#3a3a3a"/>
<rect x="870" y="402" width="8" height="1" fill="#222"/><path d="M870 403 L878 403 L874 408 Z" fill="#e0e0e0"/>
<path d="M770 429.5 L780.5 429.5 L783.5 432.5 L783.5 446.5 L770 446.5 Z" fill="#b4b4b4"/><path d="M780.5 429.5 L780.5 432.5 L783.5 432.5" fill="#e8e8e8" stroke="#444" stroke-width="0.6"/>
<circle cx="776.5" cy="434.5" r="1.8" fill="#eee" stroke="#222" stroke-width="0.9"/>
<path d="M773.5 446 L773.5 438.5 L779.5 438.5 L779.5 446" fill="#6a6a6a" stroke="#222" stroke-width="0.9"/><path d="M776.5 441 L776.5 446" stroke="#ddd" stroke-width="0.8"/>
<path d="M793 431 L806 431 L809 434 L809 444 L793 444 Z" fill="#a8a8a8"/><path d="M806 431 L806 434 L809 434" fill="#e8e8e8" stroke="#444" stroke-width="0.6"/>
<circle cx="801" cy="433.8" r="1.8" fill="#eee" stroke="#222" stroke-width="0.9"/>
<path d="M798 444 L798 437.5 L804 437.5 L804 444" fill="#6a6a6a" stroke="#222" stroke-width="0.9"/><path d="M801 440 L801 444" stroke="#ddd" stroke-width="0.8"/>
<path d="M512 481 L520 481 L516 477 Z" fill="#d4d4d4"/>
<path d="M512 486 L520 486 L516 490 Z" fill="#d4d4d4"/>
<path d="M600 481 L608 481 L604 477 Z" fill="#d4d4d4"/>
<path d="M600 486 L608 486 L604 490 Z" fill="#d4d4d4"/>
<path d="M688 481 L696 481 L692 477 Z" fill="#d4d4d4"/>
<path d="M688 486 L696 486 L692 490 Z" fill="#d4d4d4"/>
<path d="M776 481 L784 481 L780 477 Z" fill="#d4d4d4"/>
<path d="M776 486 L784 486 L780 490 Z" fill="#d4d4d4"/>
<path d="M868 482.5 L868 480.5 A3 3 0 0 1 874 480.5 L874 482.5 M868 485.5 L868 487.5 A3 3 0 0 0 874 487.5 L874 485.5" fill="none" stroke="#d8d8d8" stroke-width="1.7"/><rect x="870.3" y="481" width="1.4" height="6" fill="#d8d8d8"/>
<path d="M395.5 513 L400.5 517.5 L395.5 522 Z" fill="#9a9a9a"/>
<path d="M916.5 645 L916.5 651.5 L910.5 651.5 Z" fill="#c8c8c8"/></svg>
</body></html>
